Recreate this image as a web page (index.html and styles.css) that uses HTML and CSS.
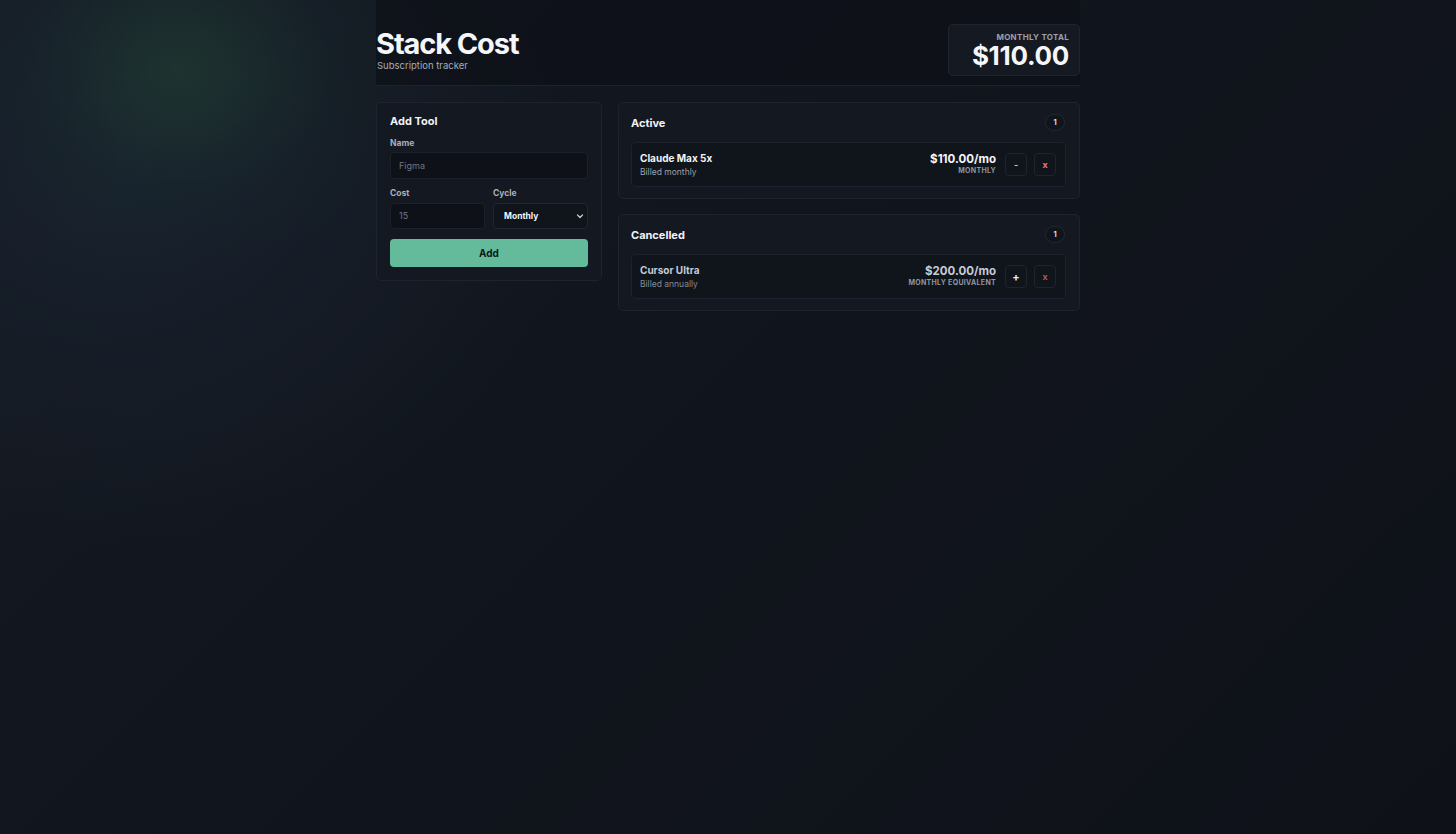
FILE: index.html
```html
<!DOCTYPE html>
<html lang="en">
<head>
<meta charset="utf-8">
<title>Stack Cost</title>
<link rel="stylesheet" href="styles.css">
</head>
<body>
<div class="page">
  <header class="header">
    <div class="brand">
      <h1 class="title">Stack Cost</h1>
      <div class="subtitle">Subscription tracker</div>
    </div>
    <div class="total">
      <div class="total-label">MONTHLY TOTAL</div>
      <div class="total-value">$110.00</div>
    </div>
  </header>
  <main class="main">
    <section class="card form-card">
      <h2 class="card-title">Add Tool</h2>
      <label class="label">Name</label>
      <div class="input"><span class="placeholder">Figma</span></div>
      <div class="row2">
        <div class="field">
          <label class="label">Cost</label>
          <div class="input"><span class="placeholder">15</span></div>
        </div>
        <div class="field">
          <label class="label">Cycle</label>
          <div class="input select"><span class="sel-text">Monthly</span>
            <svg class="chev" width="8" height="8" viewBox="0 0 8 8"><path d="M1.5 3 L4 5.5 L6.5 3" fill="none" stroke="#c9ced8" stroke-width="1.2" stroke-linecap="round" stroke-linejoin="round"/></svg>
          </div>
        </div>
      </div>
      <button class="add-btn">Add</button>
    </section>
    <div class="lists">
      <section class="card list-card">
        <div class="list-head">
          <h2 class="card-title">Active</h2>
          <span class="badge">1</span>
        </div>
        <div class="item">
          <div class="item-info">
            <div class="item-name">Claude Max 5x</div>
            <div class="item-sub">Billed monthly</div>
          </div>
          <div class="item-price">
            <div class="price">$110.00/mo</div>
            <div class="price-note">MONTHLY</div>
          </div>
          <button class="icon-btn minus">-</button>
          <button class="icon-btn del">x</button>
        </div>
      </section>
      <section class="card list-card">
        <div class="list-head">
          <h2 class="card-title">Cancelled</h2>
          <span class="badge">1</span>
        </div>
        <div class="item cancelled">
          <div class="item-info">
            <div class="item-name">Cursor Ultra</div>
            <div class="item-sub">Billed annually</div>
          </div>
          <div class="item-price">
            <div class="price">$200.00/mo</div>
            <div class="price-note">MONTHLY EQUIVALENT</div>
          </div>
          <button class="icon-btn plus">+</button>
          <button class="icon-btn del dim">x</button>
        </div>
      </section>
    </div>
  </main>
</div>
</body>
</html>
```

FILE: styles.css
```css
* { box-sizing: border-box; }
html, body { height: 100%; }
body {
  margin: 0;
  min-height: 834px;
  font-family: Inter, "Liberation Sans", sans-serif;
  color: #f1f3f7;
  background:
    radial-gradient(ellipse 250px 210px at 180px 70px, rgba(36, 72, 54, 0.5), rgba(22, 44, 42, 0.2) 60%, rgba(0,0,0,0) 100%),
    radial-gradient(ellipse 440px 380px at 130px 170px, rgba(30, 44, 62, 0.45), rgba(0,0,0,0) 100%),
    linear-gradient(135deg, #151a22 0%, #11151d 45%, #0e1118 100%);
}
.page {
  width: 704px;
  margin: 0 auto;
}
.header {
  display: flex;
  justify-content: space-between;
  align-items: center;
  padding: 24px 0 9px;
  background: rgba(13, 16, 23, 0.7);
  border-bottom: 1px solid #1d222c;
}
.title {
  margin: 0;
  font-size: 29px;
  font-weight: 700;
  letter-spacing: -1.1px;
  line-height: 32px;
  color: #f4f6f9;
}
.subtitle {
  font-size: 9.5px;
  line-height: 12px;
  color: #a7adb8;
  padding-left: 1px;
}
.total {
  width: 132px;
  height: 52px;
  border: 1px solid #1f242e;
  border-radius: 5px;
  background: #151922;
  padding: 7px 10px 0 0;
  text-align: right;
}
.total-label {
  font-size: 8px;
  font-weight: 700;
  color: #9aa1ad;
  letter-spacing: 0.3px;
  line-height: 10px;
}
.total-value {
  font-size: 26px;
  font-weight: 700;
  line-height: 28px;
  color: #f4f6f9;
  letter-spacing: -0.3px;
}
.main {
  display: grid;
  grid-template-columns: 226px 462px;
  gap: 16px;
  margin-top: 16px;
  align-items: start;
}
.card {
  background: #141821;
  border: 1px solid #1e232d;
  border-radius: 5px;
}
.form-card {
  padding: 11px 13px 13px;
}
.card-title {
  margin: 0;
  font-size: 11px;
  font-weight: 700;
  color: #f1f3f7;
  line-height: 14px;
}
.label {
  display: block;
  font-size: 8.5px;
  font-weight: 700;
  color: #a9afba;
  margin: 8.5px 0 4px;
  line-height: 11px;
}
.form-card > .label { margin: 9.5px 0 3.5px; }
.input {
  height: 27px;
  border: 1px solid #1c212b;
  border-radius: 4px;
  background: #0e1118;
  display: flex;
  align-items: center;
  padding: 0 8px;
  font-size: 9px;
}
.row2 .input { height: 26px; }
.placeholder { color: #6f7682; }
.row2 {
  display: grid;
  grid-template-columns: 1fr 1fr;
  gap: 8px;
}
.select {
  justify-content: space-between;
  padding: 0 3px 0 10px;
  border-color: #20252f;
  background: #10141b;
}
.sel-text {
  color: #f4f6f9;
  font-weight: 700;
  font-size: 8.5px;
}
.add-btn {
  display: block;
  width: 100%;
  height: 28px;
  margin-top: 10px;
  border: none;
  border-radius: 4px;
  background: #63bb9c;
  color: #0d1a16;
  font-family: inherit;
  font-size: 10px;
  font-weight: 700;
}
.lists {
  display: flex;
  flex-direction: column;
  gap: 15px;
}
.list-card {
  padding: 11px 13px 11px 12px;
}
.list-head {
  display: flex;
  justify-content: space-between;
  align-items: center;
  margin-bottom: 11px;
}
.badge {
  width: 20px;
  height: 17px;
  border-radius: 9px;
  border: 1px solid #232834;
  background: #10141b;
  font-size: 7.5px;
  font-weight: 700;
  color: #d7dbe2;
  display: flex;
  align-items: center;
  justify-content: center;
  margin-right: 1px;
}
.item {
  display: flex;
  align-items: center;
  height: 45px;
  padding: 0 9px 0 8px;
  border: 1px solid #1d222c;
  border-radius: 4px;
  background: #10141b;
}
.item-info { flex: 1; }
.item-name {
  font-size: 10px;
  font-weight: 700;
  color: #f1f3f7;
  line-height: 13px;
}
.item-sub {
  font-size: 8.5px;
  color: #9ba0a9;
  margin-top: 2px;
  line-height: 11px;
}
.item-price {
  text-align: right;
  margin-right: 9px;
}
.price {
  font-size: 11.5px;
  font-weight: 700;
  color: #f4f6f9;
  line-height: 14px;
  margin-top: -1px;
}
.price-note {
  font-size: 7px;
  font-weight: 700;
  color: #8f96a2;
  letter-spacing: 0.3px;
  line-height: 10px;
}
.cancelled .item-name, .cancelled .price { color: #c6cbd3; }
.cancelled .item-sub { color: #858b96; }
.icon-btn {
  width: 22px;
  height: 23px;
  border: 1px solid #1f242e;
  border-radius: 4px;
  background: #10141b;
  font-family: inherit;
  font-size: 9px;
  font-weight: 700;
  padding: 0;
  display: flex;
  align-items: center;
  justify-content: center;
}
.icon-btn + .icon-btn { margin-left: 7px; }
.minus { color: #d8c98a; }
.plus { color: #e8ebf0; font-size: 11px; }
.del { color: #e27a8c; }
.del.dim { color: #a35a6a; }
```
